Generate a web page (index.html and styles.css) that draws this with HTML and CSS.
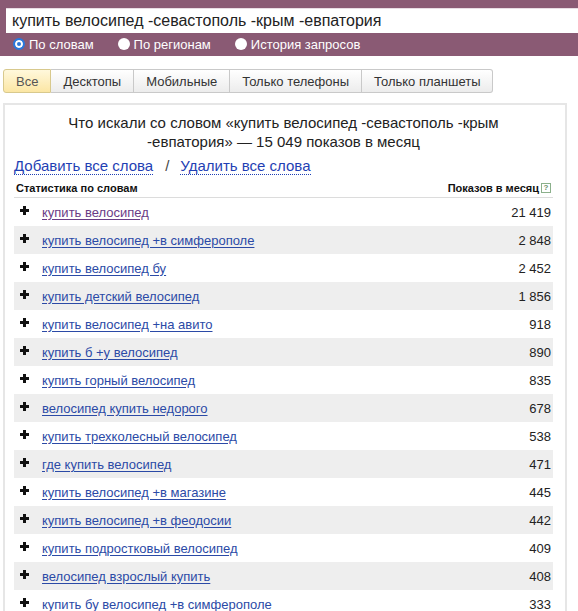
FILE: index.html
```html
<!DOCTYPE html>
<html lang="ru">
<head>
<meta charset="utf-8">
<link rel="stylesheet" href="styles.css">
</head>
<body>
<header class="search">
  <div class="query">купить велосипед -севастополь -крым -евпатория</div>
  <div class="radios">
    <span class="radio on"><i></i>По словам</span>
    <span class="radio r2"><i></i>По регионам</span>
    <span class="radio r3"><i></i>История запросов</span>
  </div>
</header>
<nav class="tabs">
  <span class="tab active">Все</span>
  <span class="tab">Десктопы</span>
  <span class="tab">Мобильные</span>
  <span class="tab">Только телефоны</span>
  <span class="tab last">Только планшеты</span>
</nav>
<section class="panel">
  <h1 class="title">Что искали со словом «купить велосипед -севастополь -крым -евпатория» — 15 049 показов в месяц</h1>
  <div class="actions"><a class="dotted">Добавить все слова</a><span class="sep">/</span><a class="dotted">Удалить все слова</a></div>
  <div class="thead"><span>Статистика по словам</span><span>Показов в месяц<b class="help">?</b></span></div>
  <div class="rows">
    <div class="row"><span class="plus"></span><a class="word visited">купить велосипед</a><span class="num">21 419</span></div>
    <div class="row"><span class="plus"></span><a class="word">купить велосипед +в симферополе</a><span class="num">2 848</span></div>
    <div class="row"><span class="plus"></span><a class="word">купить велосипед бу</a><span class="num">2 452</span></div>
    <div class="row"><span class="plus"></span><a class="word">купить детский велосипед</a><span class="num">1 856</span></div>
    <div class="row"><span class="plus"></span><a class="word">купить велосипед +на авито</a><span class="num">918</span></div>
    <div class="row"><span class="plus"></span><a class="word">купить б +у велосипед</a><span class="num">890</span></div>
    <div class="row"><span class="plus"></span><a class="word">купить горный велосипед</a><span class="num">835</span></div>
    <div class="row"><span class="plus"></span><a class="word">велосипед купить недорого</a><span class="num">678</span></div>
    <div class="row"><span class="plus"></span><a class="word">купить трехколесный велосипед</a><span class="num">538</span></div>
    <div class="row"><span class="plus"></span><a class="word">где купить велосипед</a><span class="num">471</span></div>
    <div class="row"><span class="plus"></span><a class="word">купить велосипед +в магазине</a><span class="num">445</span></div>
    <div class="row"><span class="plus"></span><a class="word">купить велосипед +в феодосии</a><span class="num">442</span></div>
    <div class="row"><span class="plus"></span><a class="word">купить подростковый велосипед</a><span class="num">409</span></div>
    <div class="row"><span class="plus"></span><a class="word">велосипед взрослый купить</a><span class="num">408</span></div>
    <div class="row"><span class="plus"></span><a class="word">купить бу велосипед +в симферополе</a><span class="num">333</span></div>
  </div>
</section>
</body>
</html>
```
FILE: styles.css
```css
* { box-sizing: border-box; }
html, body { margin: 0; padding: 0; background: #fff; }
body { font-family: "Liberation Sans", Arial, sans-serif; color: #222; overflow: hidden; }

.search {
  background: #8a5a74;
  height: 56px;
  padding: 8px 0 0 6px;
}
.query {
  background: #fff;
  height: 25px;
  border-top: 1px solid #e8dde3;
  font-size: 16px;
  line-height: 23px;
  padding-left: 6px;
  color: #222;
  white-space: nowrap;
}
.radios {
  display: flex;
  align-items: center;
  height: 22px;
  padding-left: 7px;
  font-size: 13px;
  color: #fff;
}
.radio { display: flex; align-items: center; }
.radio i {
  display: block;
  width: 12px; height: 12px;
  border-radius: 50%;
  background: #fff;
  margin-right: 4px;
}
.radio.on i { border: 2px solid #2a78dc; box-shadow: inset 0 0 0 2px #fff; background-color: #2a78dc; }
.radio.r2 { margin-left: 24px; }
.radio.r3 { margin-left: 24px; }

.tabs {
  display: flex;
  margin: 13px 0 0 3px;
  height: 24px;
}
.tab {
  display: flex;
  align-items: center;
  padding: 0 12px;
  font-size: 13px;
  color: #333;
  border: 1px solid #c9c9c9;
  border-left: none;
  background: linear-gradient(#ffffff, #ececec);
}
.tab.active {
  border-left: 1px solid #d8c98d;
  border-color: #d8c98d;
  background: linear-gradient(#fff8dc, #fbe6a4);
  color: #555;
  border-radius: 3px 0 0 3px;
  padding: 0 12px;
}
.tab.last { border-radius: 0 3px 3px 0; }

.panel {
  margin: 10px 11px 0 3px;
  border: 2px solid #e6e6e6;
  border-bottom: none;
  padding: 0 12px 0 9px;
}
.title {
  margin: 8px 0 0;
  font-size: 15px;
  font-weight: normal;
  line-height: 19px;
  text-align: center;
  color: #222;
  padding: 0 50px;
}
.actions {
  margin-top: 5px;
  font-size: 15px;
  line-height: 19px;
  color: #333;
}
.dotted {
  color: #1f3fb4;
  border-bottom: 1px dotted #1f3fb4;
  text-decoration: none;
}
.sep { margin: 0 11px 0 12px; color: #444; }

.thead {
  display: flex;
  justify-content: space-between;
  align-items: center;
  margin-top: 3px;
  height: 20px;
  padding: 0 2px;
  font-size: 11px;
  font-weight: bold;
  color: #111;
  border-bottom: 1px solid #dcdcdc;
}
.thead span { display: flex; align-items: center; }
.help {
  display: inline-block;
  width: 10px; height: 10px;
  margin-left: 2px;
  border: 1px solid #8bb08b;
  font-size: 8px;
  line-height: 8px;
  text-align: center;
  color: #6a8f6a;
  font-weight: bold;
}

.row {
  display: flex;
  align-items: center;
  height: 28px;
  padding: 0 2px 0 6px;
  font-size: 13px;
}
.row:nth-child(even) { background: #eeeeee; }
.plus {
  position: relative;
  width: 9px; height: 9px;
  margin-top: -4px;
  margin-right: 13px;
  flex: none;
}
.plus::before, .plus::after {
  content: "";
  position: absolute;
  background: #111;
}
.plus::before { left: 0; top: 3px; width: 9px; height: 3px; }
.plus::after { left: 3px; top: 0; width: 3px; height: 9px; }
.word {
  color: #2b4aa6;
  text-decoration: underline;
  text-underline-offset: 2px;
}
.word.visited { color: #6a3c86; }
.num { margin-left: auto; color: #222; }
```
